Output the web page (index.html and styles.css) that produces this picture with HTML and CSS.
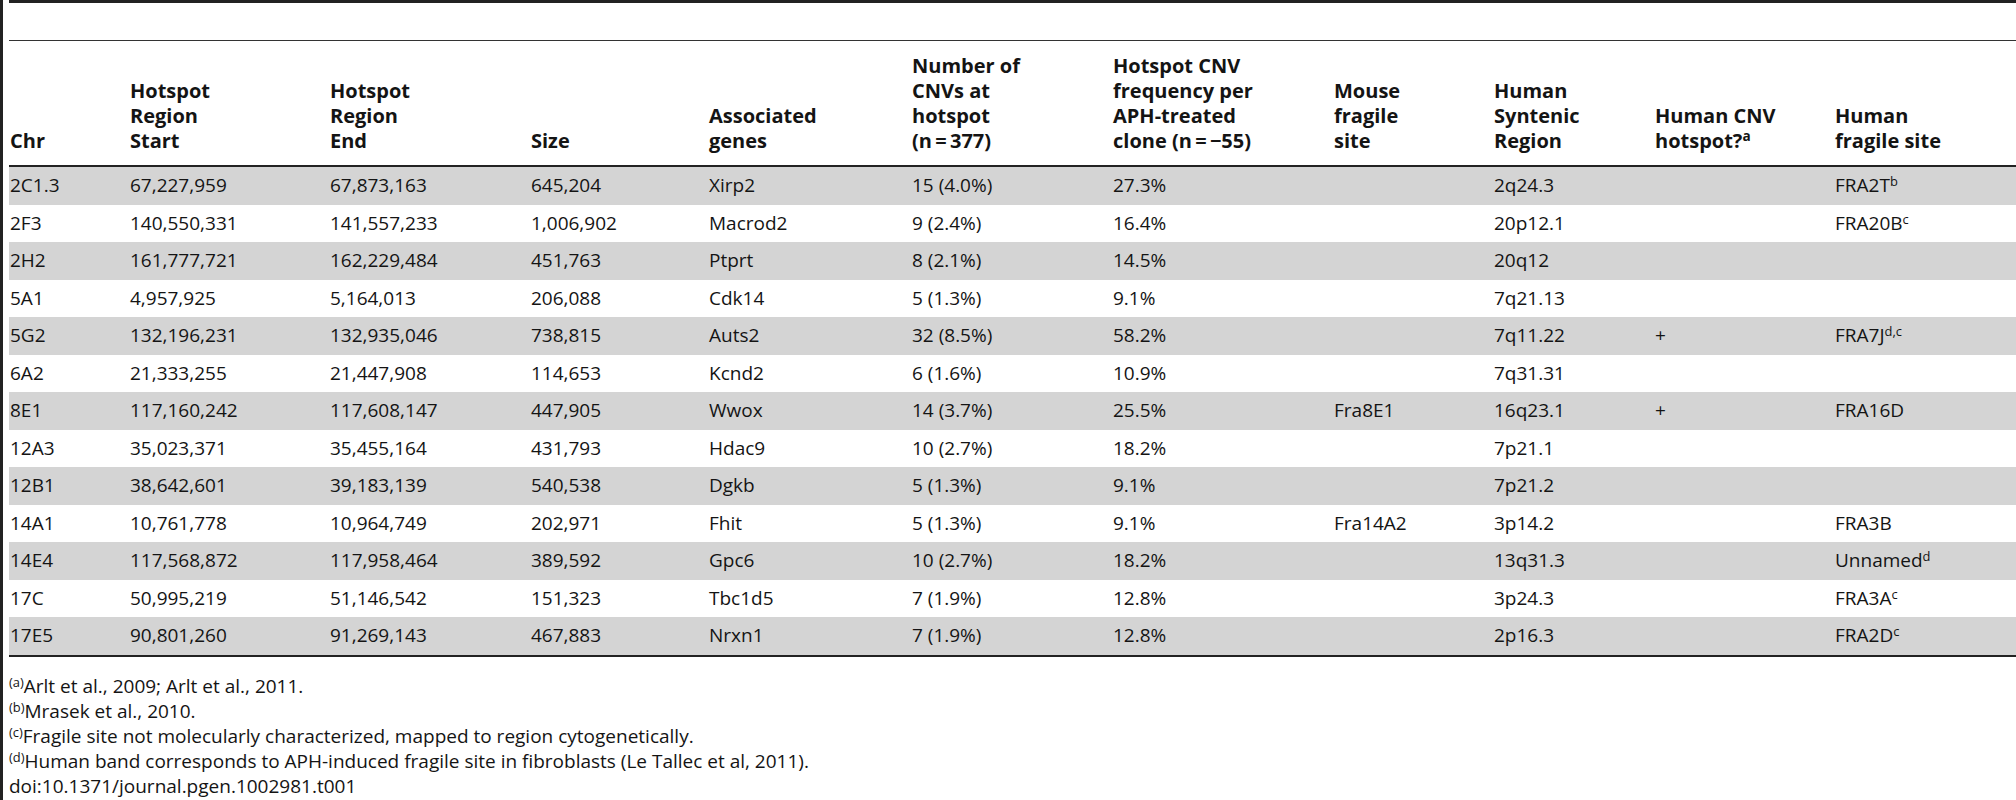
FILE: index.html
```html
<!DOCTYPE html>
<html lang="en">
<head>
    <meta charset="UTF-8">
    <meta name="viewport" content="width=device-width, initial-scale=1.0">
    <title>Table 1. CNV hotspots in APH-treated mouse clones</title>
    <link rel="stylesheet" href="styles.css">
</head>
<body>
    <div class="frame">
        <table class="data-table">
            <colgroup>
                <col class="c-chr">
                <col class="c-start">
                <col class="c-end">
                <col class="c-size">
                <col class="c-genes">
                <col class="c-count">
                <col class="c-freq">
                <col class="c-mouse">
                <col class="c-human">
                <col class="c-cnv">
                <col class="c-fragile">
            </colgroup>
            <thead>
                <tr class="title-row"><th colspan="11"></th></tr>
                <tr class="head-row">
                    <th>Chr</th>
                    <th>Hotspot<br>Region<br>Start</th>
                    <th>Hotspot<br>Region<br>End</th>
                    <th>Size</th>
                    <th>Associated<br>genes</th>
                    <th>Number of<br>CNVs at<br>hotspot<br>(n&thinsp;=&thinsp;377)</th>
                    <th>Hotspot CNV<br>frequency per<br>APH-treated<br>clone (n&thinsp;=&thinsp;&minus;55)</th>
                    <th>Mouse<br>fragile<br>site</th>
                    <th>Human<br>Syntenic<br>Region</th>
                    <th>Human CNV<br>hotspot?<sup>a</sup></th>
                    <th>Human<br>fragile site</th>
                </tr>
            </thead>
            <tbody>
                <tr><td>2C1.3</td><td>67,227,959</td><td>67,873,163</td><td>645,204</td><td>Xirp2</td><td>15 (4.0%)</td><td>27.3%</td><td></td><td>2q24.3</td><td></td><td>FRA2T<sup>b</sup></td></tr>
                <tr><td>2F3</td><td>140,550,331</td><td>141,557,233</td><td>1,006,902</td><td>Macrod2</td><td>9 (2.4%)</td><td>16.4%</td><td></td><td>20p12.1</td><td></td><td>FRA20B<sup>c</sup></td></tr>
                <tr><td>2H2</td><td>161,777,721</td><td>162,229,484</td><td>451,763</td><td>Ptprt</td><td>8 (2.1%)</td><td>14.5%</td><td></td><td>20q12</td><td></td><td></td></tr>
                <tr><td>5A1</td><td>4,957,925</td><td>5,164,013</td><td>206,088</td><td>Cdk14</td><td>5 (1.3%)</td><td>9.1%</td><td></td><td>7q21.13</td><td></td><td></td></tr>
                <tr><td>5G2</td><td>132,196,231</td><td>132,935,046</td><td>738,815</td><td>Auts2</td><td>32 (8.5%)</td><td>58.2%</td><td></td><td>7q11.22</td><td>+</td><td>FRA7J<sup>d,c</sup></td></tr>
                <tr><td>6A2</td><td>21,333,255</td><td>21,447,908</td><td>114,653</td><td>Kcnd2</td><td>6 (1.6%)</td><td>10.9%</td><td></td><td>7q31.31</td><td></td><td></td></tr>
                <tr><td>8E1</td><td>117,160,242</td><td>117,608,147</td><td>447,905</td><td>Wwox</td><td>14 (3.7%)</td><td>25.5%</td><td>Fra8E1</td><td>16q23.1</td><td>+</td><td>FRA16D</td></tr>
                <tr><td>12A3</td><td>35,023,371</td><td>35,455,164</td><td>431,793</td><td>Hdac9</td><td>10 (2.7%)</td><td>18.2%</td><td></td><td>7p21.1</td><td></td><td></td></tr>
                <tr><td>12B1</td><td>38,642,601</td><td>39,183,139</td><td>540,538</td><td>Dgkb</td><td>5 (1.3%)</td><td>9.1%</td><td></td><td>7p21.2</td><td></td><td></td></tr>
                <tr><td>14A1</td><td>10,761,778</td><td>10,964,749</td><td>202,971</td><td>Fhit</td><td>5 (1.3%)</td><td>9.1%</td><td>Fra14A2</td><td>3p14.2</td><td></td><td>FRA3B</td></tr>
                <tr><td>14E4</td><td>117,568,872</td><td>117,958,464</td><td>389,592</td><td>Gpc6</td><td>10 (2.7%)</td><td>18.2%</td><td></td><td>13q31.3</td><td></td><td>Unnamed<sup>d</sup></td></tr>
                <tr><td>17C</td><td>50,995,219</td><td>51,146,542</td><td>151,323</td><td>Tbc1d5</td><td>7 (1.9%)</td><td>12.8%</td><td></td><td>3p24.3</td><td></td><td>FRA3A<sup>c</sup></td></tr>
                <tr><td>17E5</td><td>90,801,260</td><td>91,269,143</td><td>467,883</td><td>Nrxn1</td><td>7 (1.9%)</td><td>12.8%</td><td></td><td>2p16.3</td><td></td><td>FRA2D<sup>c</sup></td></tr>
            </tbody>
        </table>

        <div class="notes">
            <p><sup>(a)</sup>Arlt et al., 2009; Arlt et al., 2011.</p>
            <p><sup>(b)</sup>Mrasek et al., 2010.</p>
            <p><sup>(c)</sup>Fragile site not molecularly characterized, mapped to region cytogenetically.</p>
            <p><sup>(d)</sup>Human band corresponds to APH-induced fragile site in fibroblasts (Le Tallec et al, 2011).</p>
            <p>doi:10.1371/journal.pgen.1002981.t001</p>
        </div>
    </div>
</body>
</html>
```

FILE: styles.css
```css
body {
    margin: 0;
    font-family: "Open Sans", "DejaVu Sans", sans-serif;
    font-size: 19px;
    line-height: 25px;
    color: #141414;
    background-color: #fff;
}
.frame {
    border-left: 3px solid #222;
    padding-left: 6px;
    min-height: 800px;
    box-sizing: border-box;
}
.data-table {
    width: 2007px;
    table-layout: fixed;
    border-collapse: collapse;
}
.c-chr { width: 120px; }
.c-start { width: 200px; }
.c-end { width: 201px; }
.c-size { width: 178px; }
.c-genes { width: 203px; }
.c-count { width: 201px; }
.c-freq { width: 221px; }
.c-mouse { width: 160px; }
.c-human { width: 161px; }
.c-cnv { width: 180px; }
.c-fragile { width: 182px; }

.data-table th,
.data-table td {
    padding: 6px 0 6.5px 1px;
    text-align: left;
    white-space: nowrap;
}
.title-row th {
    height: 37px;
    border-top: 3px solid #222;
    border-bottom: 1px solid #333;
    padding: 0;
}
.head-row th {
    font-size: 20px;
    font-weight: bold;
    vertical-align: bottom;
    padding-top: 12px;
    padding-bottom: 12px;
    border-bottom: 2px solid #222;
}
.data-table tbody tr:nth-child(odd) {
    background-color: #d4d4d4;
}
.data-table tbody tr:last-child {
    border-bottom: 2px solid #222;
}
sup {
    font-size: 0.68em;
    line-height: 0;
    vertical-align: 0.5em;
}
.notes {
    padding-top: 17px;
}
.notes p {
    margin: 0;
}
```
